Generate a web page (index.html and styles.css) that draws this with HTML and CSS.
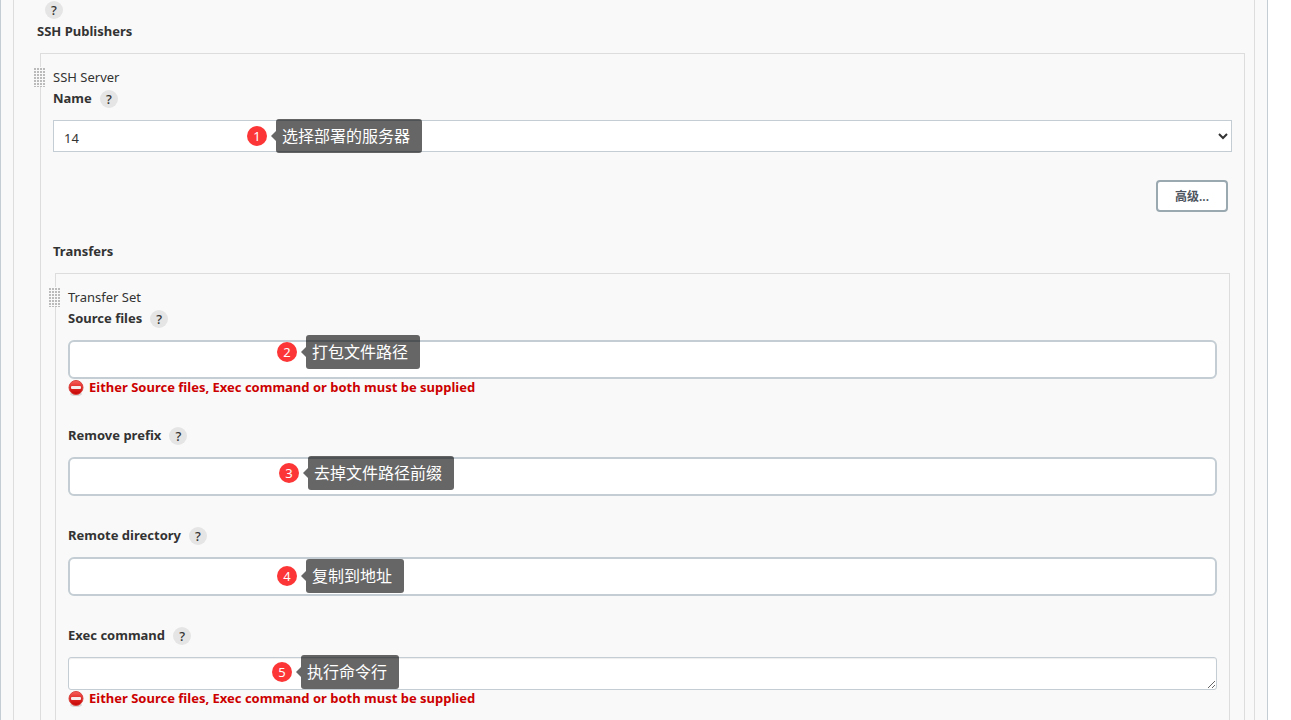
FILE: index.html
```
<!DOCTYPE html>
<html lang="zh-CN">
  <head>
    <meta charset="UTF-8" />
    <meta name="viewport" content="width=device-width, initial-scale=1.0" />
    <title>SSH Publishers</title>
    <link rel="stylesheet" href="styles.css">
  </head>
  <body>
    <main class="panel">
      <form class="section">
        <div class="help-row"><button type="button" class="help">?</button></div>
        <h2 class="title">SSH Publishers</h2>

        <div class="box server">
          <div class="box-name"><span class="drag"></span>SSH Server</div>
          <div class="label-row">
            <label for="name">Name</label>
            <button type="button" class="help">?</button>
          </div>
          <div class="field">
            <select id="name" class="select">
              <option>14</option>
            </select>
            <div class="note note-name"><span class="num">1</span><span class="tip">选择部署的服务器</span></div>
          </div>
          <div class="actions">
            <button type="button" class="advanced">高级...</button>
          </div>

          <h2 class="title">Transfers</h2>
          <div class="box transfer">
            <div class="box-name"><span class="drag"></span>Transfer Set</div>
            <div class="label-row">
              <label for="source">Source files</label>
              <button type="button" class="help">?</button>
            </div>
            <div class="field">
              <input type="text" id="source" class="input" />
              <div class="note note-source"><span class="num">2</span><span class="tip">打包文件路径</span></div>
            </div>
            <div class="error">
              <svg class="error-icon" viewBox="0 0 16 16">
                <defs>
                  <linearGradient id="red" x1="0" y1="0" x2="0" y2="1">
                    <stop offset="0" stop-color="#f9605c" />
                    <stop offset="0.5" stop-color="#e02a26" />
                    <stop offset="1" stop-color="#c40000" />
                  </linearGradient>
                </defs>
                <ellipse cx="8" cy="14" rx="6" ry="2" fill="#d8d8d8" />
                <circle cx="8" cy="7.5" r="7" fill="url(#red)" stroke="#d8443f" />
                <rect x="3" y="6" width="10" height="3" rx="1" fill="#f6eeee" />
              </svg>
              Either Source files, Exec command or both must be supplied
            </div>

            <div class="label-row next">
              <label for="prefix">Remove prefix</label>
              <button type="button" class="help">?</button>
            </div>
            <div class="field">
              <input type="text" id="prefix" class="input" />
              <div class="note note-prefix"><span class="num">3</span><span class="tip">去掉文件路径前缀</span></div>
            </div>

            <div class="label-row next">
              <label for="directory">Remote directory</label>
              <button type="button" class="help">?</button>
            </div>
            <div class="field">
              <input type="text" id="directory" class="input" />
              <div class="note note-directory"><span class="num">4</span><span class="tip">复制到地址</span></div>
            </div>

            <div class="label-row next">
              <label for="command">Exec command</label>
              <button type="button" class="help">?</button>
            </div>
            <div class="field">
              <textarea id="command" class="textarea" rows="1"></textarea>
              <div class="note note-command"><span class="num">5</span><span class="tip">执行命令行</span></div>
            </div>
            <div class="error">
              <svg class="error-icon" viewBox="0 0 16 16">
                <ellipse cx="8" cy="14" rx="6" ry="2" fill="#d8d8d8" />
                <circle cx="8" cy="7.5" r="7" fill="url(#red)" stroke="#d8443f" />
                <rect x="3" y="6" width="10" height="3" rx="1" fill="#f6eeee" />
              </svg>
              Either Source files, Exec command or both must be supplied
            </div>
          </div>
        </div>
      </form>
    </main>
  </body>
</html>
```
FILE: styles.css
```
* {
  box-sizing: border-box;
}
body {
  margin: 0;
  background: #fff;
  color: #333;
  font-family: "Noto Sans", "Noto Sans CJK SC", sans-serif;
  font-size: 13px;
  line-height: 21px;
}
.panel {
  display: flex;
  min-height: 100vh;
  margin-right: 23px;
  padding: 0 12px;
  background: #f9f9f9;
  border: solid #c3cdd3;
  border-width: 0 1px;
}
.section {
  display: flex;
  flex-direction: column;
  flex: 1;
  padding: 0 9px 0 26px;
  border: solid #ddd;
  border-width: 0 1px;
}
.help-row {
  display: flex;
  height: 21px;
  padding: 1px 0 0 5px;
}
.help {
  width: 18px;
  height: 18px;
  padding: 0;
  border: none;
  border-radius: 50%;
  background: #e5e5e5;
  color: #333;
  font-family: inherit;
  font-size: 13px;
  font-weight: 500;
  line-height: 18px;
  text-align: center;
}
.title {
  margin: 0 0 11px -3px;
  font-size: 13px;
  font-weight: bold;
  line-height: 21px;
}
.box {
  display: flex;
  flex-direction: column;
  flex: 1;
  padding: 12px;
  border: 1px solid #ddd;
  border-bottom: none;
}
.box .title {
  margin-left: 0;
}
.transfer {
  margin: 0 2px;
}
.server {
  padding-bottom: 0;
}
.box-name {
  position: relative;
  padding-top: 1px;
}
.drag {
  position: absolute;
  left: -19px;
  top: 1px;
  width: 12px;
  height: 20px;
  background:
    repeating-linear-gradient(#f9f9f9 0 1px, transparent 1px 3px),
    repeating-linear-gradient(90deg, #bbb 0 2px, #f9f9f9 2px 3px);
}
.label-row {
  display: flex;
  align-items: center;
  gap: 8px;
  margin-bottom: 11px;
  font-weight: bold;
}
.next {
  margin-top: 29px;
}
.field {
  display: flex;
  position: relative;
}
.select,
.input,
.textarea {
  width: 100%;
  background: #fff;
  color: #333;
  font-family: inherit;
  font-size: 13px;
}
.select {
  height: 32px;
  padding: 3px 1px 0 6px;
  border: 1px solid #c3cdd3;
  border-radius: 0;
}
.input {
  height: 39px;
  padding: 0 10px;
  border: 2px solid #c3cdd3;
  border-radius: 6px;
}
.textarea {
  height: 33px;
  padding: 4px 8px;
  border: 1px solid #c3cdd3;
  border-radius: 3px;
  box-shadow: inset 0 1px 1px #eee;
  resize: vertical;
}
.actions {
  display: flex;
  justify-content: flex-end;
  margin: 28px 4px 29px;
}
.advanced {
  width: 72px;
  height: 32px;
  padding: 0;
  border: 2px solid #9aa8b0;
  border-radius: 4px;
  background: #fff;
  color: #4d545d;
  font-family: inherit;
  font-size: 12px;
  font-weight: 600;
}
.error {
  display: flex;
  align-items: center;
  gap: 5px;
  height: 17px;
  color: #c00;
  font-weight: bold;
}
.error-icon {
  width: 16px;
  height: 16px;
}
/* numbered notes over the fields */
.note {
  display: flex;
  align-items: center;
  gap: 9px;
  position: absolute;
}
.note-name {
  left: 194px;
  top: -1px;
}
.note-source {
  left: 209px;
  top: -5px;
}
.note-prefix {
  left: 211px;
  top: -1px;
}
.note-directory {
  left: 209px;
  top: 2px;
}
.note-command {
  left: 204px;
  top: -2px;
}
.num {
  width: 20px;
  height: 20px;
  border-radius: 50%;
  background: #fc3636;
  color: #fff;
  font-size: 13px;
  line-height: 20px;
  text-align: center;
}
.tip {
  position: relative;
  height: 34px;
  padding: 0 12px 0 6px;
  border-radius: 3px;
  background: rgba(0, 0, 0, 0.6);
  color: #fff;
  font-size: 16px;
  line-height: 34px;
  white-space: nowrap;
}
.tip::before {
  content: "";
  position: absolute;
  left: -5px;
  top: 12px;
  border: solid transparent;
  border-width: 5px 5px 5px 0;
  border-right-color: rgba(0, 0, 0, 0.6);
}
```
